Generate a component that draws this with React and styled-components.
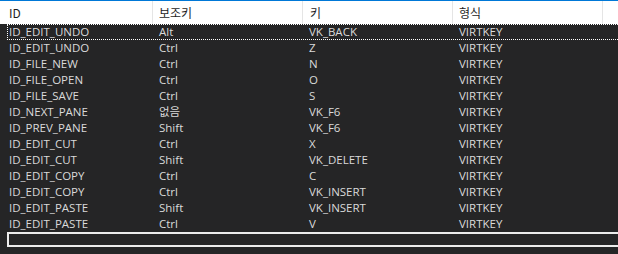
import React from "react";
import styled, { createGlobalStyle } from "styled-components";

const Global = createGlobalStyle`
  html, body { margin: 0; padding: 0; background: #252526; overflow: hidden; }
  body { font-family: "Segoe UI", "Open Sans", "Noto Sans CJK KR", sans-serif; }
`;

const Page = styled.div`
  width: 630px;
  height: 254px;
  background: #252526;
  border-top: 1px solid #0078d7;
  box-sizing: border-box;
  overflow: hidden;
`;

const Header = styled.div`
  display: grid;
  grid-template-columns: 153px 150px 150px 150px 1fr;
  height: 23px;
  background: #ffffff;
`;

const HeadCell = styled.div`
  box-sizing: border-box;
  border-right: ${(p) => (p.$last ? "none" : "1px solid #e5e5e5")};
  padding-left: ${(p) => p.$pad}px;
  font-family: "Noto Sans CJK KR", "Open Sans", sans-serif;
  font-size: 12px;
  line-height: 23px;
  color: #1e1e1e;
  white-space: nowrap;
`;

const Body = styled.div`
  display: flex;
  flex-direction: column;
`;

const Row = styled.div`
  display: grid;
  grid-template-columns: 146px 150px 150px 150px 1fr;
  height: 16px;
  margin-left: 7px;
  outline: ${(p) => (p.$focus ? "1px dotted #ffffff" : "none")};
  outline-offset: -1px;
`;

const Cell = styled.div`
  padding-left: ${(p) => p.$pad}px;
  font-family: "Open Sans", "Noto Sans CJK KR", sans-serif;
  font-size: 11.5px;
  line-height: 16px;
  color: #dadada;
  white-space: nowrap;
  overflow: hidden;
`;

const EditBox = styled.div`
  margin-left: 7px;
  height: 15px;
  border: 2px solid #ececec;
  border-right: none;
  box-sizing: border-box;
  background: #252526;
`;

const rows = [
  ["ID_EDIT_UNDO", "Alt", "VK_BACK", "VIRTKEY"],
  ["ID_EDIT_UNDO", "Ctrl", "Z", "VIRTKEY"],
  ["ID_FILE_NEW", "Ctrl", "N", "VIRTKEY"],
  ["ID_FILE_OPEN", "Ctrl", "O", "VIRTKEY"],
  ["ID_FILE_SAVE", "Ctrl", "S", "VIRTKEY"],
  ["ID_NEXT_PANE", "없음", "VK_F6", "VIRTKEY"],
  ["ID_PREV_PANE", "Shift", "VK_F6", "VIRTKEY"],
  ["ID_EDIT_CUT", "Ctrl", "X", "VIRTKEY"],
  ["ID_EDIT_CUT", "Shift", "VK_DELETE", "VIRTKEY"],
  ["ID_EDIT_COPY", "Ctrl", "C", "VIRTKEY"],
  ["ID_EDIT_COPY", "Ctrl", "VK_INSERT", "VIRTKEY"],
  ["ID_EDIT_PASTE", "Shift", "VK_INSERT", "VIRTKEY"],
  ["ID_EDIT_PASTE", "Ctrl", "V", "VIRTKEY"],
];

export default function App() {
  return (
    <Page>
      <Global />
      <Header>
        <HeadCell $pad={9}>ID</HeadCell>
        <HeadCell $pad={6}>보조키</HeadCell>
        <HeadCell $pad={7}>키</HeadCell>
        <HeadCell $pad={6}>형식</HeadCell>
        <HeadCell $last />
      </Header>
      <Body>
        {rows.map((r, i) => (
          <Row key={i} $focus={i === 0}>
            <Cell $pad={2}>{r[0]}</Cell>
            <Cell $pad={6}>{r[1]}</Cell>
            <Cell $pad={6}>{r[2]}</Cell>
            <Cell $pad={6}>{r[3]}</Cell>
            <Cell />
          </Row>
        ))}
        <EditBox />
      </Body>
    </Page>
  );
}
